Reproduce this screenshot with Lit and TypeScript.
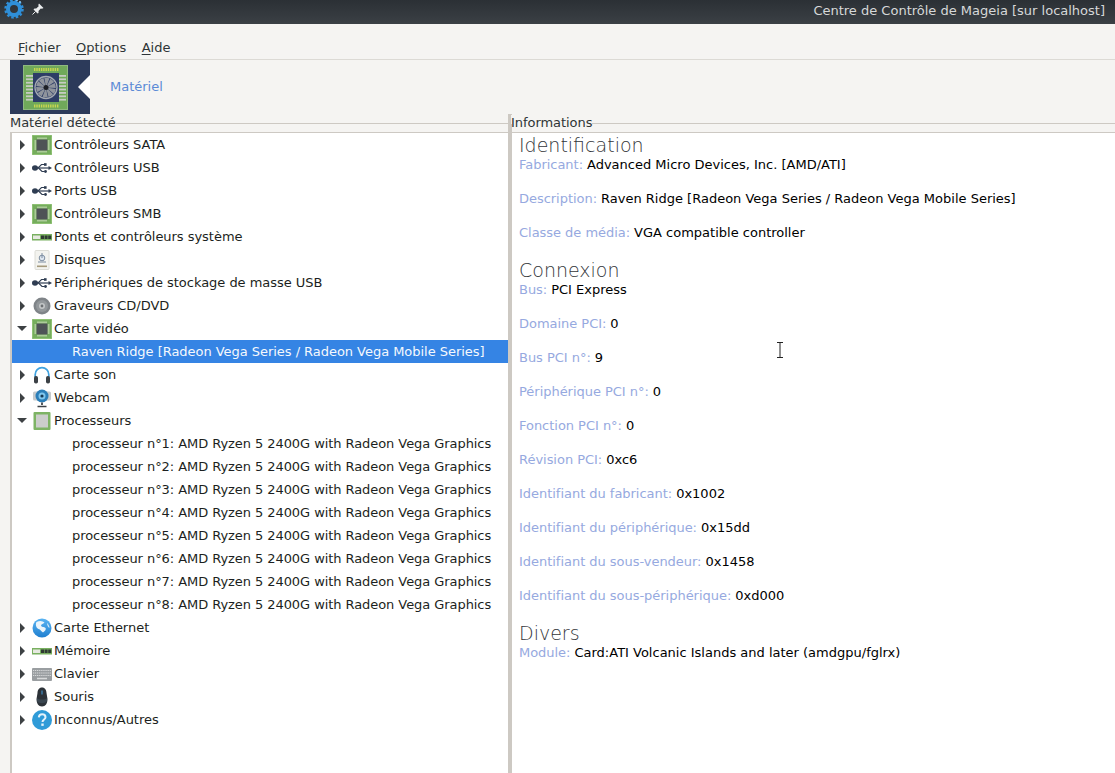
import { LitElement, html, css, svg } from "lit";
import { customElement } from "lit/decorators.js";

const chipPins = () => {
  const out = [];
  for (let i = 0; i < 5; i++) {
    const p = 5.5 + i * 2;
    out.push(svg`<rect x="${p}" y="2.5" width="1" height="2" fill="#e4ead6"/><rect x="${p}" y="15.5" width="1" height="2" fill="#e4ead6"/><rect x="2.5" y="${p}" width="2" height="1" fill="#e4ead6"/><rect x="15.5" y="${p}" width="2" height="1" fill="#e4ead6"/>`);
  }
  return out;
};
const icons: Record<string, any> = {
  chip: html`<svg width="20" height="20" viewBox="0 0 20 20"><rect width="20" height="20" rx="1" fill="#75ad5c"/><rect x=".5" y=".5" width="19" height="19" rx="1" fill="none" stroke="#8fc274"/>${chipPins()}<rect x="4.5" y="4.5" width="11" height="11" fill="#4e5356"/></svg>`,
  usb: html`<svg width="20" height="20" viewBox="0 0 20 20"><ellipse cx="3" cy="10" rx="3" ry="2.800" fill="#2f3d52"/><path d="M3 10H17.500" stroke="#2f3d52" stroke-width="1.200"/><path d="M16.500 8L20 10L16.500 12Z" fill="#2f3d52"/><path d="M6 10L9.500 6.500H12.500" stroke="#2f3d52" stroke-width="1.100" fill="none"/><rect x="12" y="5.200" width="2.600" height="2.600" fill="#2f3d52"/><path d="M6.500 10L10 13.500H12.500" stroke="#2f3d52" stroke-width="1.100" fill="none"/><circle cx="13.500" cy="13.500" r="1.400" fill="#2f3d52"/></svg>`,
  ram: html`<svg width="20" height="20" viewBox="0 0 20 20"><rect y="7" width="20" height="6.500" fill="#79b060"/><rect x="1" y="8.500" width="7" height="3.500" fill="#e6e8e0"/><rect x="9" y="8.500" width="3" height="3.500" fill="#2f3a33"/><rect x="12.600" y="8.500" width="3" height="3.500" fill="#2f3a33"/><rect x="16.200" y="8.500" width="3" height="3.500" fill="#2f3a33"/></svg>`,
  disk: html`<svg width="20" height="20" viewBox="0 0 20 20"><rect x="3" y=".5" width="14" height="19" rx="1" fill="#f3f3ef" stroke="#dcdcd6"/><circle cx="10" cy="8" r="2.800" fill="#dfe7f0" stroke="#7d8da1"/><path d="M10 3V8M6 12H14" stroke="#7d8da1"/><rect x="5" y="15.500" width="10" height="1.600" fill="#a59a7c"/></svg>`,
  cd: html`<svg width="20" height="20" viewBox="0 0 20 20"><circle cx="10" cy="10" r="8.500" fill="#7f8488"/><circle cx="10" cy="10" r="6" fill="#93989b"/><circle cx="10" cy="10" r="3" fill="#c4c7c8"/><circle cx="10" cy="10" r="1.400" fill="#6c7073"/></svg>`,
  headset: html`<svg width="20" height="20" viewBox="0 0 20 20"><path d="M3.200 12V9.500a6.800 6.800 0 0 1 13.600 0V12" fill="none" stroke="#3fa2e0" stroke-width="1.700"/><rect x="2" y="11" width="4" height="7.500" rx="1.800" fill="#3c4146"/><rect x="14" y="11" width="4" height="7.500" rx="1.800" fill="#3c4146"/></svg>`,
  webcam: html`<svg width="20" height="20" viewBox="0 0 20 20"><rect x="1" y="3.500" width="18" height="9" rx="1.500" fill="#c6cacc"/><circle cx="10" cy="8" r="6.500" fill="#2b7eb8"/><circle cx="10" cy="8" r="3.500" fill="#7fc6ee"/><circle cx="10" cy="8" r="1.600" fill="#173a55"/><path d="M9 14.500H11V17H9Z" fill="#54595d"/><path d="M5.500 18.500H14.500" stroke="#3c4146" stroke-width="1.500"/></svg>`,
  cpu: html`<svg width="20" height="20" viewBox="0 0 20 20"><rect x="1.500" y="1" width="17" height="18" rx="1" fill="#7db364"/><rect x="4" y="3.500" width="12" height="13" fill="#cbcdcb"/></svg>`,
  globe: html`<svg width="20" height="20" viewBox="0 0 20 20"><defs><linearGradient id="gl" x1="0" y1="0" x2="0" y2="1"><stop offset="0" stop-color="#5ab4f2"/><stop offset="1" stop-color="#1f7fd0"/></linearGradient></defs><circle cx="10" cy="10" r="9.500" fill="url(#gl)"/><path d="M4.500 4C8 2 11 3 12.500 4.500C11 6 9.500 6 9 7.500C9.500 9.500 12 8.500 13.500 10C14.500 11.500 12.500 13.500 11 14.500C9 13 8.500 11.500 6.500 11C4.500 10 3 7 4.500 4Z" fill="#eaf4fb"/><path d="M15 5C16.500 6 17.500 8 17.500 10C16 9.500 15 7 15 5Z" fill="#d2e8f8"/></svg>`,
  kbd: html`<svg width="20" height="20" viewBox="0 0 20 20"><rect y="4" width="20" height="13" rx="1" fill="#9a9ea1"/><path d="M1 6.500H19M1 9H19M1 11.500H19" stroke="#d8dadb" stroke-width="1" stroke-dasharray="1.200 .7"/><path d="M5 14.500H15" stroke="#d8dadb" stroke-width="1.500"/></svg>`,
  mouse: html`<svg width="20" height="20" viewBox="0 0 20 20"><path d="M10 .5C13 .5 14.500 3 14.500 6L15.500 12C15.500 16.500 13.500 19.500 10 19.500C6.500 19.500 4.500 16.500 4.500 12L5.500 6C5.500 3 7 .5 10 .5Z" fill="#2c3238"/><path d="M5 11C7 13 13 13 15 11V14C13 17 7 17 5 14Z" fill="#3a4650"/><rect x="9.300" y="3.500" width="1.400" height="4" fill="#3d7fb0"/></svg>`,
  help: html`<svg width="20" height="20" viewBox="0 0 20 20"><circle cx="10" cy="10" r="10" fill="#2f9bd8"/><path d="M6.800 7.300C7 5.300 8.500 4.300 10.200 4.300C12.100 4.300 13.500 5.500 13.500 7.200C13.500 9.500 10.500 9.600 10.500 12" fill="none" stroke="#e4f2fb" stroke-width="2"/><rect x="9.300" y="13.500" width="2.400" height="2.400" fill="#e4f2fb"/></svg>`,
};

type Row = { t: string; icon?: string; state?: "open" | "closed"; child?: boolean; sel?: boolean };
const proc = (n: number): Row => ({ t: `processeur n°${n}: AMD Ryzen 5 2400G with Radeon Vega Graphics`, child: true });
const rows: Row[] = [
  { t: "Contrôleurs SATA", icon: "chip", state: "closed" },
  { t: "Contrôleurs USB", icon: "usb", state: "closed" },
  { t: "Ports USB", icon: "usb", state: "closed" },
  { t: "Contrôleurs SMB", icon: "chip", state: "closed" },
  { t: "Ponts et contrôleurs système", icon: "ram", state: "closed" },
  { t: "Disques", icon: "disk", state: "closed" },
  { t: "Périphériques de stockage de masse USB", icon: "usb", state: "closed" },
  { t: "Graveurs CD/DVD", icon: "cd", state: "closed" },
  { t: "Carte vidéo", icon: "chip", state: "open" },
  { t: "Raven Ridge [Radeon Vega Series / Radeon Vega Mobile Series]", child: true, sel: true },
  { t: "Carte son", icon: "headset", state: "closed" },
  { t: "Webcam", icon: "webcam", state: "closed" },
  { t: "Processeurs", icon: "cpu", state: "open" },
  ...[1, 2, 3, 4, 5, 6, 7, 8].map(proc),
  { t: "Carte Ethernet", icon: "globe", state: "closed" },
  { t: "Mémoire", icon: "ram", state: "closed" },
  { t: "Clavier", icon: "kbd", state: "closed" },
  { t: "Souris", icon: "mouse", state: "closed" },
  { t: "Inconnus/Autres", icon: "help", state: "closed" },
];

const sections: { h: string; items: [string, string][] }[] = [
  { h: "Identification", items: [
    ["Fabricant:", "Advanced Micro Devices, Inc. [AMD/ATI]"],
    ["Description:", "Raven Ridge [Radeon Vega Series / Radeon Vega Mobile Series]"],
    ["Classe de média:", "VGA compatible controller"],
  ] },
  { h: "Connexion", items: [
    ["Bus:", "PCI Express"],
    ["Domaine PCI:", "0"],
    ["Bus PCI n°:", "9"],
    ["Périphérique PCI n°:", "0"],
    ["Fonction PCI n°:", "0"],
    ["Révision PCI:", "0xc6"],
    ["Identifiant du fabricant:", "0x1002"],
    ["Identifiant du périphérique:", "0x15dd"],
    ["Identifiant du sous-vendeur:", "0x1458"],
    ["Identifiant du sous-périphérique:", "0xd000"],
  ] },
  { h: "Divers", items: [["Module:", "Card:ATI Volcanic Islands and later (amdgpu/fglrx)"]] },
];

const gear = html`<svg width="20" height="20" viewBox="0 0 20 20"><circle cx="10" cy="10" r="6" fill="none" stroke="#2f8fd8" stroke-width="4"/><circle cx="10" cy="10" r="8.500" fill="none" stroke="#2f8fd8" stroke-width="2.500" stroke-dasharray="2.500 2"/><circle cx="16" cy="3" r="1" fill="#8cc6ef"/><circle cx="13" cy="1.500" r=".8" fill="#8cc6ef"/></svg>`;
const pin = html`<svg width="14" height="14" viewBox="0 0 14 14"><path d="M8 1.500L12.500 6L11 6.800L9.800 6.500L7.500 9L7.500 11L6.500 11.500L2.500 7.500L3.500 6.500L5.200 6.500L7.700 4.200L7.300 3Z" fill="#eceeef"/><path d="M4.500 9.500L1.500 12.500" stroke="#eceeef"/></svg>`;

const banner = () => {
  const teeth = [];
  for (let i = 0; i < 11; i++) {
    teeth.push(svg`<rect x="${11 + i * 2.3}" y="3" width="1.400" height="3" fill="#c9d64f"/><rect x="${11 + i * 2.3}" y="39.500" width="1.400" height="3" fill="#c9d64f"/>`);
  }
  for (let i = 0; i < 8; i++) {
    const y = 10 + i * 3.4;
    teeth.push(svg`<rect x="3" y="${y}" width="7" height="1.800" fill="#c5cbc2"/><rect x="36" y="${y}" width="7" height="1.800" fill="#c5cbc2"/>`);
  }
  const blades = [];
  for (let i = 0; i < 10; i++) {
    blades.push(svg`<path d="M23 22.500L21.300 12.800A10 10 0 0 1 26.500 13.300Z" fill="#8f949c" transform="rotate(${i * 36} 23 22.500)"/>`);
  }
  return html`<svg width="45" height="45" viewBox="0 0 45 45">
    <rect width="45" height="45" fill="#70a95a"/>
    <rect x=".5" y=".5" width="44" height="44" fill="none" stroke="#8fb97f"/>
    ${teeth}
    <rect x="10" y="8" width="26" height="29" fill="#2d3d66"/>
    ${blades}
    <circle cx="23" cy="22.500" r="11" fill="none" stroke="#a4a9b1" stroke-width="1.300"/>
    <circle cx="23" cy="22.500" r="2.500" fill="#1e2026"/>
  </svg>`;
};

@customElement("app-root")
export class AppRoot extends LitElement {
  static styles = css`
    :host {
      display: flex; flex-direction: column; width: 1115px; height: 773px; overflow: hidden;
      background: #f5f4f2; color: #2e3436;
      font-family: "DejaVu Sans", sans-serif; font-size: 13px;
    }
    .titlebar {
      height: 24px; flex: none; display: flex; align-items: center; box-sizing: border-box;
      background: linear-gradient(#2b3035, #3b4045); color: #d6d8d9; padding: 0 10px 3px 4px;
    }
    .titlebar .gear { width: 20px; height: 20px; margin-top: -4px; }
    .titlebar .pin { width: 14px; height: 14px; margin-left: 7px; margin-top: -4px; }
    .titlebar .title { margin-left: auto; }
    svg { display: block; }
    .menu {
      height: 36px; flex: none; box-sizing: border-box; display: flex; gap: 15.5px; align-items: flex-end;
      padding: 0 0 3px 18px; border-bottom: 1px solid #dcdad5; line-height: 16px;
    }
    .menu u { text-underline-offset: 2px; }
    .banner { height: 54px; flex: none; padding-left: 10px; display: flex; align-items: stretch; }
    .logo {
      position: relative; width: 80px; background: #2c3a5a; display: flex; align-items: center; padding-left: 13px; box-sizing: border-box;
    }
    .logo::after {
      content: ""; position: absolute; right: 0; top: 15px;
      border: 12px solid transparent; border-right: 12px solid #ffffff; border-left: 0;
    }
    .crumb { color: #5b8ad6; margin: 18px 0 0 20px; line-height: 18px; }
    .panes { flex: 1; display: flex; min-height: 0; padding-left: 10px; }
    .pane { display: flex; flex-direction: column; min-height: 0; }
    .left { width: 498px; flex: none; }
    .right { flex: 1; min-width: 0; }
    .split { width: 4px; flex: none; background: #cdc9c3; }
    .legend { height: 18px; flex: none; display: flex; position: relative; letter-spacing: -0.05px; }
    .legend span { position: relative; z-index: 1; margin-top: 1px; line-height: 16px; height: 9px; background: #f5f4f2; }
    .legend.rl span { margin-left: -1px; }
    .legend::after { content: ""; position: absolute; left: 0; right: 0; top: 9px; height: 1px; background: #cdc9c3; }
    .box { flex: 1; min-height: 0; background: #fff; border-top: 1px solid #cdc9c3; }
    .tree { border-left: 2px solid #cdc9c3; overflow: hidden; }
    .row { height: 23px; display: flex; align-items: center; color: #1c1f21; white-space: nowrap; box-sizing: border-box; letter-spacing: -0.03px; }
    .row .arrow { width: 20px; flex: none; display: flex; justify-content: center; }
    .row .ic { width: 20px; height: 20px; flex: none; margin-right: 2px; }
    .row.child { padding-left: 60px; letter-spacing: -0.065px; }
    .row.sel { background: #3584e4; color: #f4f8fd; letter-spacing: -0.035px; }
    .tri-c { width: 0; height: 0; border-left: 5px solid #3d4144; border-top: 5px solid transparent; border-bottom: 5px solid transparent; margin-left: 1px; }
    .tri-o { width: 0; height: 0; border-top: 5px solid #3d4144; border-left: 5px solid transparent; border-right: 5px solid transparent; }
    .info { padding: 1px 0 0 7px; line-height: 17px; color: #000; position: relative; box-sizing: border-box; }
    h2 { margin: 0; font-weight: 300; font-size: 19px; color: #33363a; line-height: 22px; }
    section { padding-bottom: 7px; }
    .kv { height: 34px; box-sizing: border-box; white-space: nowrap; }
    .kv:last-child { height: 28px; }
    .kv i { font-style: normal; color: #96a9e0; margin-right: 4px; letter-spacing: -0.03px; }
    .cursor { position: absolute; left: 264px; top: 209px; }
  `;

  render() {
    return html`
      <div class="titlebar">
        <span class="gear">${gear}</span><span class="pin">${pin}</span>
        <span class="title">Centre de Contrôle de Mageia [sur localhost]</span>
      </div>
      <div class="menu">
        <span><u>F</u>ichier</span><span><u>O</u>ptions</span><span><u>A</u>ide</span>
      </div>
      <div class="banner">
        <div class="logo">${banner()}</div>
        <div class="crumb">Matériel</div>
      </div>
      <div class="panes">
        <div class="pane left">
          <div class="legend"><span>Matériel détecté</span></div>
          <div class="box tree">
            ${rows.map((r) => r.child
              ? html`<div class="row child ${r.sel ? "sel" : ""}">${r.t}</div>`
              : html`<div class="row">
                  <span class="arrow"><span class="${r.state === "open" ? "tri-o" : "tri-c"}"></span></span>
                  <span class="ic">${icons[r.icon!]}</span>${r.t}
                </div>`)}
          </div>
        </div>
        <div class="split"></div>
        <div class="pane right">
          <div class="legend rl"><span>Informations</span></div>
          <div class="box info">
            ${sections.map((s) => html`<section>
              <h2>${s.h}</h2>
              ${s.items.map(([k, v]) => html`<div class="kv"><i>${k}</i>${v}</div>`)}
            </section>`)}
            <svg class="cursor" width="8" height="16" viewBox="0 0 8 16"><path d="M1 .5H7M4 .5V15.500M1 15.500H7" stroke="#222" fill="none"/></svg>
          </div>
        </div>
      </div>
    `;
  }
}
